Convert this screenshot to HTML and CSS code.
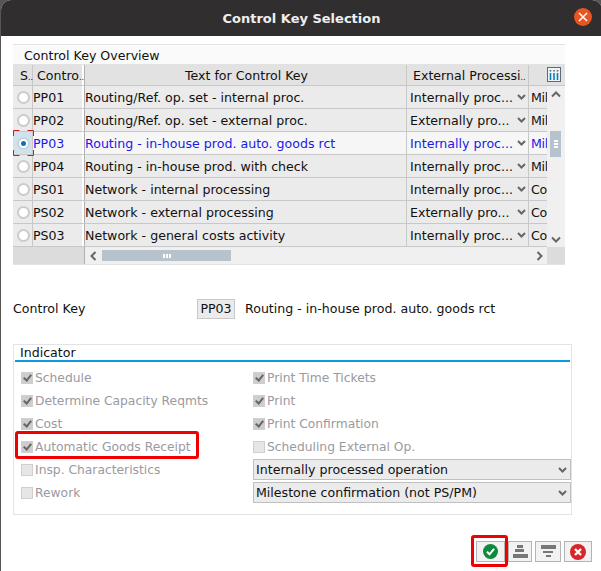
FILE: index.html
```html
<!DOCTYPE html>
<html lang="en">
<head>
    <meta charset="UTF-8">
    <meta name="viewport" content="width=device-width, initial-scale=1.0">
    <title>Control Key Selection</title>
    <link rel="stylesheet" href="styles.css">
</head>
<body>
    <div class="dialog">
        <div class="titlebar">
            <span class="titlebar-text">Control Key Selection</span>
            <span class="close-btn">
                <svg width="10" height="10" viewBox="0 0 10 10"><path d="M1 1L9 9M9 1L1 9" stroke="#fff" stroke-width="1.5" fill="none"/></svg>
            </span>
        </div>

        <div class="overview">
            <div class="overview-title">Control Key Overview</div>
            <div class="overview-body">
                <div class="table-area">
                    <!-- Header -->
                    <div class="row head-row">
                        <div class="cell sel-cell head-cell">S<i>..</i></div>
                        <div class="cell key-cell head-cell">Contro<i>..</i></div>
                        <div class="cell text-cell head-cell head-center">Text for Control Key</div>
                        <div class="cell ext-cell head-cell">External Processi<i>..</i></div>
                        <div class="cell conf-cell head-cell"></div>
                    </div>

                    <!-- Rows -->
                    <div class="row">
                        <div class="cell sel-cell"><span class="radio"></span></div>
                        <div class="cell key-cell">PP01</div>
                        <div class="cell text-cell">Routing/Ref. op. set - internal proc.</div>
                        <div class="cell ext-cell"><span class="ext-text">Internally proc...</span><svg class="chev" viewBox="0 0 9 6"><path d="M1 1L4.5 4.5L8 1" /></svg></div>
                        <div class="cell conf-cell">Mil</div>
                    </div>
                    <div class="row">
                        <div class="cell sel-cell"><span class="radio"></span></div>
                        <div class="cell key-cell">PP02</div>
                        <div class="cell text-cell">Routing/Ref. op. set - external proc.</div>
                        <div class="cell ext-cell"><span class="ext-text">Externally pro...</span><svg class="chev" viewBox="0 0 9 6"><path d="M1 1L4.5 4.5L8 1" /></svg></div>
                        <div class="cell conf-cell">Mil</div>
                    </div>
                    <div class="row row-selected">
                        <div class="cell sel-cell">
                            <span class="radio radio-on"></span>
                            <svg class="focus-marks" width="21" height="26" viewBox="0 0 21 26"><path d="M.5 6V.5H6.5M14.5 .5H20.5V6M20.5 20V25.5H14.5M6.5 25.5H.5V20" fill="none" stroke="#c8201c"/></svg>
                        </div>
                        <div class="cell key-cell">PP03</div>
                        <div class="cell text-cell">Routing - in-house prod. auto. goods rct</div>
                        <div class="cell ext-cell"><span class="ext-text">Internally proc...</span><svg class="chev" viewBox="0 0 9 6"><path d="M1 1L4.5 4.5L8 1" /></svg></div>
                        <div class="cell conf-cell">Mil</div>
                    </div>
                    <div class="row">
                        <div class="cell sel-cell"><span class="radio"></span></div>
                        <div class="cell key-cell">PP04</div>
                        <div class="cell text-cell">Routing - in-house prod. with check</div>
                        <div class="cell ext-cell"><span class="ext-text">Internally proc...</span><svg class="chev" viewBox="0 0 9 6"><path d="M1 1L4.5 4.5L8 1" /></svg></div>
                        <div class="cell conf-cell">Mil</div>
                    </div>
                    <div class="row">
                        <div class="cell sel-cell"><span class="radio"></span></div>
                        <div class="cell key-cell">PS01</div>
                        <div class="cell text-cell">Network - internal processing</div>
                        <div class="cell ext-cell"><span class="ext-text">Internally proc...</span><svg class="chev" viewBox="0 0 9 6"><path d="M1 1L4.5 4.5L8 1" /></svg></div>
                        <div class="cell conf-cell">Co</div>
                    </div>
                    <div class="row">
                        <div class="cell sel-cell"><span class="radio"></span></div>
                        <div class="cell key-cell">PS02</div>
                        <div class="cell text-cell">Network - external processing</div>
                        <div class="cell ext-cell"><span class="ext-text">Externally pro...</span><svg class="chev" viewBox="0 0 9 6"><path d="M1 1L4.5 4.5L8 1" /></svg></div>
                        <div class="cell conf-cell">Co</div>
                    </div>
                    <div class="row">
                        <div class="cell sel-cell"><span class="radio"></span></div>
                        <div class="cell key-cell">PS03</div>
                        <div class="cell text-cell">Network - general costs activity</div>
                        <div class="cell ext-cell"><span class="ext-text">Internally proc...</span><svg class="chev" viewBox="0 0 9 6"><path d="M1 1L4.5 4.5L8 1" /></svg></div>
                        <div class="cell conf-cell">Co</div>
                    </div>

                    <!-- Horizontal scrollbar -->
                    <div class="hscroll-row">
                        <div class="hscroll-fixed"></div>
                        <div class="hscroll">
                            <svg class="arrow" width="7" height="10" viewBox="0 0 7 10"><path d="M5.5 1L1.5 5L5.5 9" /></svg>
                            <div class="hscroll-track">
                                <div class="hscroll-thumb"><span></span><span></span><span></span></div>
                            </div>
                            <svg class="arrow" width="7" height="10" viewBox="0 0 7 10"><path d="M1.5 1L5.5 5L1.5 9" /></svg>
                        </div>
                    </div>
                </div>

                <div class="vscroll">
                    <div class="vscroll-head">
                        <svg width="14" height="15" viewBox="0 0 14 15">
                            <rect x=".5" y=".5" width="13" height="14" fill="#eef3f6" stroke="#5f6b74"/>
                            <path d="M3.5 6V13M7 6V13M10.5 6V13" stroke="#0a7fb8" stroke-width="1.6"/>
                            <path d="M3.5 3V4.5M7 3V4.5M10.5 3V4.5" stroke="#5f6b74" stroke-width="1.6"/>
                        </svg>
                    </div>
                    <div class="vscroll-track">
                        <svg class="arrow" width="10" height="7" viewBox="0 0 10 7"><path d="M1 5.5L5 1.5L9 5.5" /></svg>
                        <div class="vscroll-thumb"><span></span><span></span><span></span></div>
                        <svg class="arrow arrow-down" width="10" height="7" viewBox="0 0 10 7"><path d="M1 1.5L5 5.5L9 1.5" /></svg>
                    </div>
                    <div class="vscroll-corner"></div>
                </div>
            </div>
        </div>

        <div class="key-line">
            <span class="key-label">Control Key</span>
            <span class="key-value">PP03</span>
            <span class="key-desc">Routing - in-house prod. auto. goods rct</span>
        </div>

        <div class="indicator">
            <div class="indicator-title">Indicator</div>
            <div class="indicator-grid">
                <div class="check-row"><span class="check check-on"></span>Schedule</div>
                <div class="check-row"><span class="check check-on"></span>Print Time Tickets</div>
                <div class="check-row"><span class="check check-on"></span>Determine Capacity Reqmts</div>
                <div class="check-row"><span class="check check-on"></span>Print</div>
                <div class="check-row"><span class="check check-on"></span>Cost</div>
                <div class="check-row"><span class="check check-on"></span>Print Confirmation</div>
                <div class="check-row check-marked"><span class="check check-on"></span>Automatic Goods Receipt</div>
                <div class="check-row"><span class="check"></span>Scheduling External Op.</div>
                <div class="check-row"><span class="check"></span>Insp. Characteristics</div>
                <div class="drop">Internally processed operation<svg class="chev" viewBox="0 0 9 6"><path d="M1 1L4.5 4.5L8 1" /></svg></div>
                <div class="check-row"><span class="check"></span>Rework</div>
                <div class="drop">Milestone confirmation (not PS/PM)<svg class="chev" viewBox="0 0 9 6"><path d="M1 1L4.5 4.5L8 1" /></svg></div>
            </div>
        </div>

        <div class="footer">
            <div class="tool-btn tool-btn-ok">
                <svg width="15" height="15" viewBox="0 0 16 16"><circle cx="8" cy="8" r="8" fill="#0f8a3c"/><path d="M4.2 8.2L7 11L11.8 5.2" fill="none" stroke="#fff" stroke-width="2.2"/></svg>
            </div>
            <div class="tool-btn tool-btn-up">
                <svg width="15" height="13" viewBox="0 0 15 13"><path d="M4 0H10V3H4ZM2 4H11V7H2ZM0 9H15V13H0Z" fill="#777"/></svg>
            </div>
            <div class="tool-btn tool-btn-down">
                <svg width="15" height="13" viewBox="0 0 15 13"><path d="M0 0H15V4H0ZM2 6H12V8H2ZM5 10H10V12H5Z" fill="#777"/></svg>
            </div>
            <div class="tool-btn tool-btn-cancel">
                <svg width="16" height="16" viewBox="0 0 16 16"><circle cx="8" cy="8" r="8" fill="#d6262b"/><path d="M5 5L11 11M11 5L5 11" fill="none" stroke="#fff" stroke-width="2.4"/></svg>
            </div>
        </div>
    </div>
</body>
</html>
```

FILE: styles.css
```css
*, *::before, *::after {
    margin: 0;
    padding: 0;
    box-sizing: border-box;
    font-family: "DejaVu Sans", Verdana, sans-serif;
}

html, body {
    width: 601px;
    height: 571px;
    overflow: hidden;
    background: #5a5552;
}

body {
    color: #111;
    font-size: 12.6px;
}

.dialog {
    width: 601px;
    height: 571px;
    margin-left: 1px;
    background: #fff;
    border-radius: 10px 10px 0 0;
    overflow: hidden;
}

.titlebar {
    height: 36px;
    background: #302e2e;
    display: flex;
    align-items: center;
    justify-content: center;
    position: relative;
}

.titlebar-text {
    color: #eee;
    font-weight: bold;
    font-size: 13px;
}

.close-btn {
    position: absolute;
    right: 10px;
    top: 8px;
    width: 18px;
    height: 18px;
    border-radius: 50%;
    background: #e95420;
    display: flex;
    align-items: center;
    justify-content: center;
}

/* Overview table */
.overview {
    width: 552px;
    margin: 8px 0 0 12px;
    border-top: 1px solid #e3e3e3;
    border-bottom: 1px solid #e3e3e3;
}

.overview-title {
    height: 19px;
    line-height: 22px;
    padding-left: 11px;
    background: #fafafa;
}

.overview-body {
    display: flex;
}

.table-area {
    width: 534px;
    overflow: hidden;
}

.row {
    display: flex;
    height: 23px;
    background: #ebebeb;
    border-bottom: 1px solid #c8c8c8;
}

.head-row {
    height: 22px;
    padding-top: 1px;
    background: #e2e2e2;
}

.row-selected {
    background: #f6f6f6;
    color: #1a1ae6;
}

.cell {
    display: flex;
    align-items: center;
    white-space: nowrap;
    overflow: hidden;
    border-right: 1px solid #c8c8c8;
}

.cell i {
    font-style: normal;
    font-size: 8px;
    align-self: flex-end;
    line-height: 14px;
}

.sel-cell {
    width: 20px;
    padding-left: 4px;
    overflow: visible;
    position: relative;
}

.row-selected .sel-cell {
    background: #cfe2ee;
}

.key-cell {
    width: 52px;
    border-right: 1px solid #b0b0b0;
    box-shadow: inset -2px 0 0 #fff;
}

.text-cell {
    width: 322px;
}

.ext-cell {
    width: 122px;
    padding: 0 2px 0 3px;
    justify-content: space-between;
}

.conf-cell {
    width: 18px;
    padding-left: 2px;
    letter-spacing: -0.3px;
    border-right: none;
}

.sel-cell.head-cell {
    padding-left: 7px;
}

.key-cell.head-cell {
    padding-left: 4px;
}

.ext-cell.head-cell {
    padding-left: 6px;
    justify-content: flex-start;
}

.text-cell.head-center {
    padding-left: 2px;
    justify-content: center;
}

.radio {
    width: 13px;
    height: 13px;
    border-radius: 50%;
    background: #fff;
    border: 2px solid #cbcbcb;
    display: flex;
    align-items: center;
    justify-content: center;
    flex: none;
}

.radio-on {
    border-color: #c6d4dd;
}

.radio-on::after {
    content: "";
    width: 5px;
    height: 5px;
    border-radius: 50%;
    background: #0a74c4;
}

.focus-marks {
    position: absolute;
    left: 0;
    top: -2px;
    z-index: 2;
}

.chev {
    width: 9px;
    height: 6px;
    flex: none;
}

.chev path, .arrow path {
    fill: none;
    stroke: #666;
    stroke-width: 2;
}

/* Scrollbars */
.hscroll-row {
    display: flex;
    height: 17px;
}

.hscroll-fixed {
    width: 72px;
    background: #dcdcdc;
    border-right: 1px solid #b0b0b0;
    box-shadow: inset -2px 0 0 #dcdcdc;
}

.hscroll {
    flex: 1;
    display: flex;
    align-items: center;
    padding: 0 4px 0 5px;
    background: #f0f0f0;
}

.hscroll-track {
    flex: 1;
    height: 11px;
    padding-left: 5px;
}

.hscroll-thumb {
    width: 129px;
    height: 11px;
    background: #b6c2cc;
    display: flex;
    align-items: center;
    justify-content: center;
    gap: 1px;
}

.hscroll-thumb span {
    width: 2px;
    height: 4px;
    background: #fff;
}

.vscroll {
    width: 18px;
    display: flex;
    flex-direction: column;
}

.vscroll-head {
    height: 22px;
    background: #e2e2e2;
    border-bottom: 1px solid #c8c8c8;
    display: flex;
    align-items: center;
}

.vscroll-track {
    flex: 1;
    background: #f0f0f0;
    position: relative;
    display: flex;
    flex-direction: column;
    align-items: center;
    padding-top: 5px;
}

.vscroll-thumb {
    position: absolute;
    top: 45px;
    left: 3px;
    width: 11px;
    height: 26px;
    background: #b6c2cc;
    display: flex;
    flex-direction: column;
    align-items: center;
    justify-content: center;
    gap: 1px;
}

.vscroll-thumb span {
    width: 4px;
    height: 2px;
    background: #fff;
}

.arrow-down {
    position: absolute;
    bottom: 4px;
}

.vscroll-corner {
    height: 17px;
    background: #dcdcdc;
}

/* Control key line */
.key-line {
    display: flex;
    align-items: center;
    margin: 33px 0 0 12px;
    height: 21px;
}

.key-label {
    width: 184px;
}

.key-value {
    width: 38px;
    height: 20px;
    line-height: 18px;
    text-align: center;
    background: #ebebeb;
    border: 1px solid #c8c8c8;
}

.key-desc {
    margin-left: 10px;
}

/* Indicator group */
.indicator {
    width: 559px;
    height: 171px;
    margin: 25px 0 0 12px;
    border: 1px solid #e3e3e3;
    padding: 0 1px;
}

.indicator-title {
    height: 17px;
    line-height: 15px;
    padding-left: 5px;
    border-bottom: 2px solid #0a9add;
}

.indicator-grid {
    display: grid;
    grid-template-columns: 232px 318px;
    grid-auto-rows: 23px;
    margin-top: 4px;
    padding-left: 6px;
}

.check-row {
    display: flex;
    align-items: center;
    color: #9a9a9f;
    font-size: 12.3px;
    white-space: nowrap;
    position: relative;
}

.check {
    width: 12px;
    height: 12px;
    margin-right: 2px;
    background: #e6e6e6;
    border: 1px solid #cfcfcf;
    flex: none;
    position: relative;
}

.check-on {
    background: #cdcdcd;
}

.check-on::after {
    content: "";
    position: absolute;
    left: 3px;
    top: 0;
    width: 5px;
    height: 8px;
    border: solid #666;
    border-width: 0 2px 2px 0;
    transform: rotate(40deg);
}

.drop {
    height: 21px;
    margin-top: 1px;
    display: flex;
    align-items: center;
    justify-content: space-between;
    padding: 0 3px 0 2px;
    background: #ebebeb;
    border: 1px solid #c0c0c0;
    color: #111;
}

/* Red annotation frames */
.check-marked::before,
.tool-btn-ok::before {
    content: "";
    position: absolute;
    border: 3px solid #f00000;
    border-radius: 3px;
}

.check-marked::before {
    left: -6px;
    top: -4px;
    width: 184px;
    height: 28px;
}

/* Buttons */
.footer {
    display: flex;
    justify-content: flex-end;
    gap: 3px;
    margin: 26px 10px 0 0;
}

.tool-btn {
    height: 21px;
    background: #f2f2f2;
    border: 1px solid #b4b4b4;
    display: flex;
    align-items: center;
    justify-content: center;
    position: relative;
}

.tool-btn-ok {
    width: 29px;
}

.tool-btn-up {
    width: 24px;
}

.tool-btn-down {
    width: 26px;
}

.tool-btn-cancel {
    width: 28px;
}

.tool-btn-ok::before {
    left: -6px;
    top: -7px;
    width: 37px;
    height: 32px;
}
```
